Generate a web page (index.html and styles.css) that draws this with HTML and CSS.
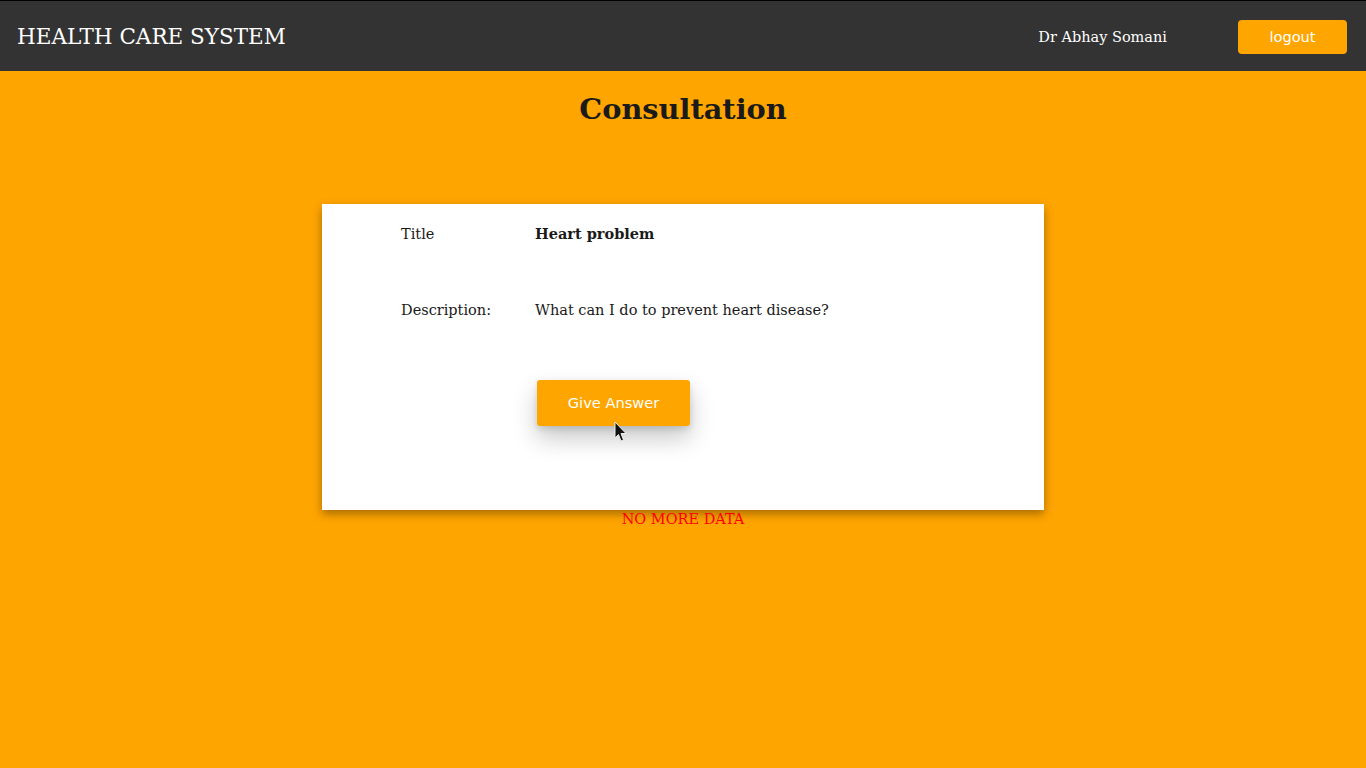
FILE: index.html
```html
<!DOCTYPE html>
<html>
<head>
<meta charset="utf-8">
<link rel="stylesheet" href="styles.css">
</head>
<body>
<nav class="nav">
  <div class="brand">HEALTH CARE SYSTEM</div>
  <div class="nav-right">
    <span class="user">Dr Abhay Somani</span>
    <button class="logout">logout</button>
  </div>
</nav>
<main class="main">
  <h1 class="heading">Consultation</h1>
  <section class="card">
    <div class="row">
      <div class="label">Title</div>
      <div class="value bold">Heart problem</div>
    </div>
    <div class="row">
      <div class="label">Description:</div>
      <div class="value">What can I do to prevent heart disease?</div>
    </div>
    <div class="row actions">
      <div class="label"></div>
      <div class="btn-wrap">
        <button class="answer">Give Answer</button>
        <svg class="cursor" width="14" height="22" viewBox="0 0 14 22"><path d="M1 1 L1 17 L4.5 13.5 L7 20 L9.5 19 L7 12.5 L12 12.5 Z" fill="#111" stroke="#eee" stroke-width="1"/></svg>
      </div>
    </div>
  </section>
  <p class="nomore">NO MORE DATA</p>
</main>
</body>
</html>
```
FILE: styles.css
```css
html, body {
  margin: 0;
  padding: 0;
  background: #ffa500;
  font-family: "DejaVu Serif", serif;
  color: #1a1a1a;
}
.nav {
  height: 71px;
  box-sizing: border-box;
  border-top: 1px solid #000;
  background: #333333;
  display: flex;
  align-items: center;
  justify-content: space-between;
  padding: 2px 19px 0 17px;
}
.brand {
  color: #fff;
  font-size: 21.5px;
  padding-bottom: 2px;
}
.nav-right {
  display: flex;
  align-items: center;
  gap: 71px;
}
.user {
  color: #fff;
  font-size: 14.5px;
}
.logout {
  width: 109px;
  height: 34px;
  background: #ffa500;
  border: none;
  border-radius: 4px;
  color: #fff;
  font-family: "DejaVu Sans", sans-serif;
  font-size: 14.6px;
  padding: 0 0 2px;
}
.main {
  display: flex;
  flex-direction: column;
  align-items: center;
}
.heading {
  margin: 22px 0 0;
  font-size: 28.8px;
  font-weight: bold;
  line-height: 32px;
}
.card {
  margin-top: 79px;
  width: 722px;
  height: 306px;
  box-sizing: border-box;
  background: #fff;
  box-shadow: 0 4px 9px rgba(0,0,0,0.35);
  padding: 21px 0 0 79px;
}
.row {
  display: flex;
  font-size: 14.5px;
  line-height: 18px;
  height: 76px;
}
.label {
  width: 134px;
}
.bold {
  font-weight: bold;
}
.actions {
  height: auto;
  margin-top: 3px;
}
.btn-wrap {
  position: relative;
  margin-left: 2px;
}
.answer {
  width: 153px;
  height: 46px;
  background: #ffa500;
  border: none;
  border-radius: 3px;
  color: #fff;
  font-family: "DejaVu Sans", sans-serif;
  font-size: 14.6px;
  padding: 0 0 2px;
  box-shadow: 0 12px 24px rgba(0,0,0,0.22), 0 3px 6px rgba(0,0,0,0.12);
}
.cursor {
  position: absolute;
  left: 77px;
  top: 41px;
}
.nomore {
  margin: 0;
  color: #ff0000;
  font-size: 14.5px;
  line-height: 18px;
}
```
